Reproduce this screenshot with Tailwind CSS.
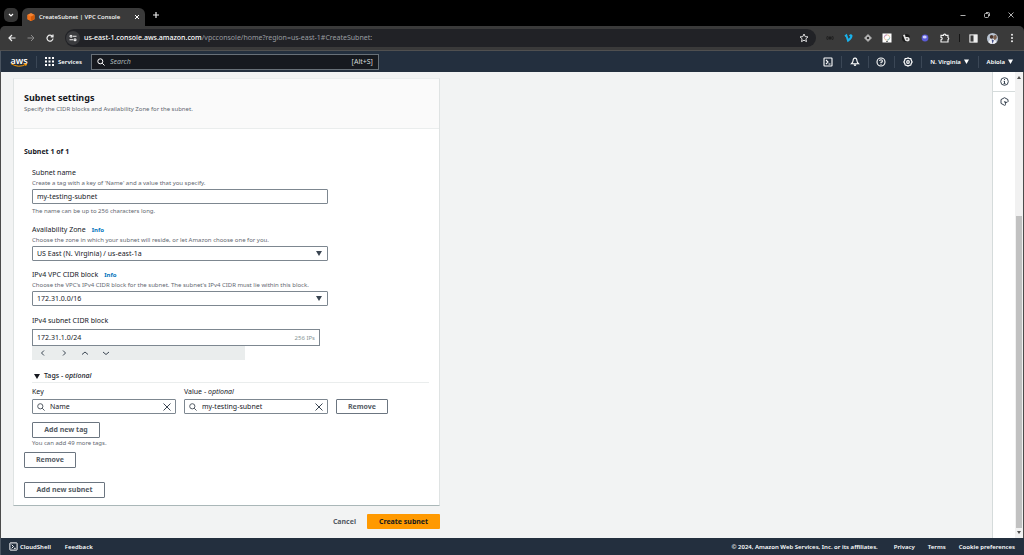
<!DOCTYPE html>
<html lang="en">
<head>
<meta charset="utf-8">
<title>CreateSubnet | VPC Console</title>
<script src="https://cdn.jsdelivr.net/npm/@tailwindcss/browser@4"></script>
</head>
<body class="flex min-h-screen flex-col bg-black font-['Noto_Sans','Open_Sans',sans-serif] text-[7px] leading-[10px] text-[#16191f]">

<!-- Tab strip -->
<div class="flex h-[26px] items-end bg-black pl-1 text-white">
  <button aria-label="Search tabs" class="mb-1 flex size-[14px] items-center justify-center rounded-[5px] bg-[#353535]">
    <svg class="size-2" viewBox="0 0 8 8" fill="none" stroke="#fff" stroke-width="1.200"><path d="M2 3l2 2 2-2"/></svg>
  </button>
  <div class="ml-1 flex h-[18px] w-[123px] items-center rounded-t-[6px] bg-[#3a3a3a] pr-1 pl-[5px]">
    <svg class="size-[8px] shrink-0" viewBox="0 0 16 16"><path d="M8 0l7 3.500v9L8 16l-7-3.500v-9z" fill="#f58534"/><path d="M8 7l7-3.500v9L8 16z" fill="#d45b07"/><path d="M1 3.500L8 7v9l-7-3.500z" fill="#f0701a"/></svg>
    <span class="ml-[4px] flex-1 text-[6px] font-medium whitespace-nowrap">CreateSubnet | VPC Console</span>
    <button aria-label="Close tab"><svg class="size-2" viewBox="0 0 8 8" stroke="#fff" stroke-width="1"><path d="M2 2l4 4M6 2l-4 4"/></svg></button>
  </div>
  <button aria-label="New tab" class="mb-[7px] ml-[7px]"><svg class="size-2" viewBox="0 0 8 8" stroke="#eee" stroke-width="1.200"><path d="M4 1v6M1 4h6"/></svg></button>
  <div class="mb-[7px] ml-auto flex gap-4 pr-[9px]">
    <button aria-label="Minimize"><svg class="size-2" viewBox="0 0 8 8" stroke="#ddd" stroke-width=".8"><path d="M1.500 4.500h5"/></svg></button>
    <button aria-label="Restore"><svg class="size-2" viewBox="0 0 8 8" fill="none" stroke="#ddd" stroke-width=".8"><rect x="1.500" y="2.500" width="4" height="4" rx="1"/><path d="M3 1.500h2.500a1 1 0 0 1 1 1V5"/></svg></button>
    <button aria-label="Close"><svg class="size-2" viewBox="0 0 8 8" stroke="#ddd" stroke-width=".8"><path d="M1.500 1.500l5 5M6.500 1.500l-5 5"/></svg></button>
  </div>
</div>

<!-- Browser toolbar -->
<div class="flex h-[25px] items-center rounded-t-[5px] border-b border-[#505050] bg-[#3a3a3a] pr-[7px] pl-2 text-white">
  <div class="flex gap-[11px]">
    <button aria-label="Back"><svg class="size-2" viewBox="0 0 8 8" fill="none" stroke="#eee" stroke-width="1.200"><path d="M7.500 4H1.200M4 1L1 4l3 3"/></svg></button>
    <button aria-label="Forward"><svg class="size-2" viewBox="0 0 8 8" fill="none" stroke="#8a8a8a" stroke-width="1"><path d="M.5 4h6.300M4 1l3 3-3 3"/></svg></button>
    <button aria-label="Reload"><svg class="size-2" viewBox="0 0 8 8" fill="none" stroke="#eee" stroke-width="1.200"><path d="M6.500 2.500A3 3 0 1 0 7 4.500M7 .5v2.300H4.700"/></svg></button>
  </div>
  <div class="ml-[11px] flex h-[18px] flex-1 items-center rounded-full bg-[#212226] pr-[7px] pl-[1px]">
    <span class="flex size-[14px] items-center justify-center rounded-full bg-[#3a3b3e]"><svg class="size-2" viewBox="0 0 8 8" fill="none" stroke="#eee" stroke-width="1.100"><circle cx="2" cy="2.200" r="1"/><path d="M4 2.200h3.500M.5 5.800H4"/><circle cx="6" cy="5.800" r="1"/></svg></span>
    <div role="textbox" tabindex="0" aria-label="Address" class="ml-1 flex-1 text-[7px] whitespace-nowrap text-[#9a9da1]"><span class="font-medium text-white">us-east-1.console.aws.amazon.com</span>/vpcconsole/home?region=us-east-1#CreateSubnet:</div>
    <button aria-label="Bookmark"><svg class="size-[10px]" viewBox="0 0 10 10" fill="none" stroke="#eee" stroke-width=".9"><path d="M5 1l1.200 2.600 2.800.3-2.100 1.900.6 2.800L5 7.200 2.500 8.600l.6-2.800L1 3.900l2.800-.3z"/></svg></button>
  </div>
  <div class="ml-[9px] flex items-center gap-[9px]">
    <svg class="size-[10px]" viewBox="0 0 10 10" fill="none" stroke="#161616" stroke-width=".8"><path d="M2.500 3Q1 5 2.500 7M7.500 3Q9 5 7.500 7M4 3.500v3M6 3.500v3"/><circle cx="5" cy="5" r="1"/></svg>
    <svg class="size-[10px]" viewBox="0 0 10 10" fill="none" stroke="#19b1ea" stroke-width="2"><path d="M1 3.200l1.300-.9L4 7.600C6 6 7.600 4.200 7.500 2.700Q6.800 1.600 5.600 3.200"/></svg>
    <svg class="size-[10px]" viewBox="0 0 10 10"><path d="M5 1l4 4-4 4-4-4z" fill="#a9a9a9"/><circle cx="5" cy="5" r="1.800" fill="#303030" stroke="#ddd" stroke-width=".7"/></svg>
    <svg class="size-[10px]" viewBox="0 0 10 10"><rect x=".5" y=".5" width="9" height="9" fill="#fff"/><circle cx="5" cy="4.500" r="2.700" fill="none" stroke="#e3b98b" stroke-width=".8"/><path d="M2.300 4.500A2.700 2.700 0 0 1 5 1.800" fill="none" stroke="#b98bd0" stroke-width=".8"/><path d="M7.700 4.500A2.700 2.700 0 0 1 5 7.200" fill="none" stroke="#6fbfd0" stroke-width=".8"/><path d="M4 8.500h2" stroke="#777"/></svg>
    <svg class="size-[10px]" viewBox="0 0 10 10"><circle cx="5" cy="5" r="4" fill="#1c1c1c"/><path d="M2 2l2-.5.500 2.500H6.500a2.200 2.200 0 0 1 0 4.500Q4 8.500 3.500 6z" fill="#e4e4e4"/><path d="M5 6h2" stroke="#333"/></svg>
    <svg class="size-[10px]" viewBox="0 0 10 10"><circle cx="5" cy="5" r="3.400" fill="#5b5bd6"/><ellipse cx="4.700" cy="4" rx="2" ry="1.500" fill="#cfd0ff"/></svg>
    <button aria-label="Extensions" class="ml-px"><svg class="size-[10px]" viewBox="0 0 10 10" fill="none" stroke="#eee" stroke-width="1.200"><path d="M1 2.300h2.500a1.200 1.200 0 0 1 2.400 0H8v2.200a1.200 1.200 0 0 1 0 2.200V9H1V6.800a1.200 1.200 0 0 0 0-2.400z"/></svg></button>
    <span class="h-2 w-px bg-[#151515]"></span>
    <button aria-label="Side panel"><svg class="size-[9px]" viewBox="0 0 10 10"><rect x="1" y="1" width="8" height="8" fill="none" stroke="#eee" stroke-width="1.200"/><path d="M5 1h4v8H5z" fill="#eee"/></svg></button>
    <button aria-label="Profile"><svg class="size-[11px]" viewBox="0 0 12 12"><circle cx="6" cy="6" r="6" fill="#b9c4d2"/><path d="M1.500 10L4 6l2 1.500L8 6l2.300 4A6 6 0 0 1 1.500 10z" fill="#f0f0f4"/><circle cx="5" cy="4.300" r="2" fill="#4d372d"/><path d="M7 3l3-1 .8 3.500L8.500 8 7 6z" fill="#7a5f4d"/><path d="M5 7l1 5 1.500-4z" fill="#44508a"/></svg></button>
    <button aria-label="Menu"><svg class="size-[10px]" viewBox="0 0 10 10" fill="#eee"><circle cx="5" cy="1.700" r="1"/><circle cx="5" cy="5" r="1"/><circle cx="5" cy="8.300" r="1"/></svg></button>
  </div>
</div>

<!-- AWS navigation -->
<header class="flex h-[21px] items-center border-l border-[#4a5460] bg-[#232f3e] pr-2 pl-[9px] text-[6px] font-semibold text-white">
  <a href="#" aria-label="AWS home" class="flex w-[18px] flex-col items-center">
    <span class="text-[9px] leading-[9px] font-semibold">aws</span>
    <svg class="-mt-[2px] h-[4px] w-[18px]" viewBox="0 0 18 4" fill="none" stroke="#f90" stroke-width="1"><path d="M1 .6Q8.500 5.500 16 1.300M13.800.8l2.700.2-.9 2"/></svg>
  </a>
  <span class="ml-2 h-3 w-px bg-[#3b4756]"></span>
  <button class="ml-2 flex items-center gap-1">
    <svg class="size-[9px]" viewBox="0 0 9 9" fill="#fff"><path d="M0 0h2v2H0zM3.500 0h2v2h-2zM7 0h2v2H7zM0 3.500h2v2H0zM3.500 3.500h2v2h-2zM7 3.500h2v2H7zM0 7h2v2H0zM3.500 7h2v2h-2zM7 7h2v2H7z"/></svg>
    Services
  </button>
  <div class="ml-[9px] flex h-4 w-[288px] items-center border border-[#687078] bg-[#16191f] px-[5px] text-[7px] font-normal">
    <svg class="size-2 shrink-0" viewBox="0 0 8 8" fill="none" stroke="#fff" stroke-width="1"><circle cx="3.300" cy="3.300" r="2.500"/><path d="M5.200 5.200l2.300 2.300"/></svg>
    <input type="text" aria-label="Search" placeholder="Search" class="ml-[5px] min-w-0 flex-1 bg-transparent italic outline-none placeholder:text-[#aab7b8]">
    <span class="text-[#d5dbdb]">[Alt+S]</span>
  </div>
  <div class="ml-auto flex items-center divide-x divide-[#3b4756]">
    <button aria-label="CloudShell" class="flex h-3 w-[27px] items-center justify-center"><svg class="size-[10px]" viewBox="0 0 10 10" fill="none" stroke="#fff" stroke-width="1.100"><rect x="1" y="1" width="8" height="8" rx=".5"/><path d="M3 3l2 2-2 2M5.500 7h2"/></svg></button>
    <button aria-label="Notifications" class="flex h-3 w-[27px] items-center justify-center"><svg class="size-[10px]" viewBox="0 0 10 10" fill="none" stroke="#fff" stroke-width="1.100"><path d="M5 1q2 .3 2 3 0 1 1.700 2.800H1.300Q3 5 3 4q0-2.700 2-3zM4 7.500q1 2 2 0"/></svg></button>
    <button aria-label="Help" class="flex h-3 w-[26px] items-center justify-center"><svg class="size-[10px]" viewBox="0 0 10 10" fill="none" stroke="#fff" stroke-width="1.100"><circle cx="5" cy="5" r="4"/><path d="M3.600 4a1.400 1.300 0 1 1 1.400 1.300v.8M5 6.800v1"/></svg></button>
    <button aria-label="Settings" class="flex h-3 w-[27px] items-center justify-center"><svg class="size-[10px]" viewBox="0 0 10 10" fill="none" stroke="#fff" stroke-width="1.200"><path d="M5 .9l1.300.6 1.500.1.400 1.500.9 1.900-.9 1.600-.4 1.500-1.500.3L5 9.100l-1.300-.7-1.500-.3-.4-1.500L.9 5l.9-1.900.4-1.500 1.500-.1z"/><circle cx="5" cy="5" r="1.300"/></svg></button>
    <button class="flex h-3 w-[57px] items-center justify-center gap-[3px] whitespace-nowrap">N. Virginia <svg class="size-[5px]" viewBox="0 0 5 5" fill="#fff"><path d="M0 .5h5L2.500 5z"/></svg></button>
    <button class="flex h-3 items-center gap-[3px] pr-[3px] pl-2">Abiola <svg class="size-[5px]" viewBox="0 0 5 5" fill="#fff"><path d="M0 .5h5L2.500 5z"/></svg></button>
  </div>
</header>

<!-- Page -->
<div class="flex flex-1 border-x border-[#4b4b4b] bg-[#f2f3f3]">
  <main class="flex-1 pt-[6px] pb-2 pl-3">
    <form class="max-w-[427px]">
      <section class="border border-t-[#eaeded] border-x-[#dfe3e3] border-b-[#aab7b8] bg-white pb-[7px]">
        <div class="h-[50px] border-b border-[#eaeded] bg-[#fafafa] pt-[13px] pl-[10px]">
          <h2 class="text-[9px] leading-[12px] font-bold">Subnet settings</h2>
          <p class="text-[6px] leading-[10px] text-[#5f6770]">Specify the CIDR blocks and Availability Zone for the subnet.</p>
        </div>
        <div class="px-[10px] pt-[18px]">
          <h3 class="text-[7px] leading-[10px] font-bold">Subnet 1 of 1</h3>

          <div class="mt-[11px] ml-2 flex max-w-[296px] flex-col gap-[9px]">
            <div>
              <label for="name" class="block">Subnet name</label>
              <p class="text-[6px] text-[#5f6770]">Create a tag with a key of 'Name' and a value that you specify.</p>
              <input id="name" type="text" value="my-testing-subnet" class="mt-px block h-[15px] w-full rounded-[1px] border border-[#7d8790] bg-white px-1 outline-none">
              <p class="mt-[2px] text-[6px] text-[#5f6770]">The name can be up to 256 characters long.</p>
            </div>
            <div>
              <div class="flex gap-[6px]"><label for="az">Availability Zone</label><a href="#" class="text-[6px] font-bold text-[#0073bb]">Info</a></div>
              <p class="text-[6px] text-[#5f6770]">Choose the zone in which your subnet will reside, or let Amazon choose one for you.</p>
              <div class="relative mt-px">
                <select id="az" class="block h-[15px] w-full appearance-none rounded-[1px] border border-[#7d8790] bg-white px-1 outline-none"><option>US East (N. Virginia) / us-east-1a</option></select>
                <svg class="pointer-events-none absolute top-[5px] right-[6px] h-[5px] w-[6px]" viewBox="0 0 6 5" fill="#3a4552"><path d="M0 0h6L3 5z"/></svg>
              </div>
            </div>
            <div>
              <div class="flex gap-[6px]"><label for="vpc">IPv4 VPC CIDR block</label><a href="#" class="text-[6px] font-bold text-[#0073bb]">Info</a></div>
              <p class="text-[6px] whitespace-nowrap text-[#5f6770]">Choose the VPC's IPv4 CIDR block for the subnet. The subnet's IPv4 CIDR must lie within this block.</p>
              <div class="relative mt-px">
                <select id="vpc" class="block h-[15px] w-full appearance-none rounded-[1px] border border-[#7d8790] bg-white px-1 outline-none"><option>172.31.0.0/16</option></select>
                <svg class="pointer-events-none absolute top-[5px] right-[6px] h-[5px] w-[6px]" viewBox="0 0 6 5" fill="#3a4552"><path d="M0 0h6L3 5z"/></svg>
              </div>
            </div>
            <div class="mt-px">
              <label for="cidr" class="block">IPv4 subnet CIDR block</label>
              <div class="mt-[3px] mr-2 flex h-[17px] items-center border border-[#7d8790] px-1">
                <input id="cidr" type="text" value="172.31.1.0/24" class="min-w-0 flex-1 outline-none">
                <span class="text-[6px] text-[#879596]">256 IPs</span>
              </div>
              <div class="flex h-[14px] w-[213px] items-center gap-[13px] bg-[#eaeded] pl-[7px]">
                <button type="button" aria-label="Previous block"><svg class="size-2" viewBox="0 0 8 8" fill="none" stroke="#3a4552"><path d="M5 1.500L2.500 4 5 6.500"/></svg></button>
                <button type="button" aria-label="Next block"><svg class="size-2" viewBox="0 0 8 8" fill="none" stroke="#3a4552"><path d="M3 1.500L5.500 4 3 6.500"/></svg></button>
                <button type="button" aria-label="Larger block"><svg class="size-2" viewBox="0 0 8 8" fill="none" stroke="#3a4552"><path d="M1 5.500L4 3l3 2.500"/></svg></button>
                <button type="button" aria-label="Smaller block"><svg class="size-2" viewBox="0 0 8 8" fill="none" stroke="#3a4552"><path d="M1 3l3 2.500L7 3"/></svg></button>
              </div>
            </div>
          </div>

          <div class="mt-[11px] ml-2">
            <button type="button" class="flex w-full items-center gap-[4px] border-b border-[#eaeded] pb-px pl-[2px] font-medium"><svg class="h-[5px] w-[6px]" viewBox="0 0 6 5" fill="#16191f"><path d="M0 0h6L3 5z"/></svg><span>Tags - <i>optional</i></span></button>
            <div class="mt-[4px] flex items-end gap-2">
              <div class="w-[144px]">
                <label for="key" class="block">Key</label>
                <div class="mt-[2px] flex h-[15px] items-center rounded-[1px] border border-[#7d8790] px-1">
                  <svg class="size-2 shrink-0" viewBox="0 0 8 8" fill="none" stroke="#545b64"><circle cx="3.300" cy="3.300" r="2.600"/><path d="M5.200 5.200l2.400 2.400"/></svg>
                  <input id="key" type="text" value="Name" class="ml-[5px] min-w-0 flex-1 outline-none">
                  <button type="button" aria-label="Clear key"><svg class="size-2" viewBox="0 0 8 8" stroke="#3a4552"><path d="M.5.5l7 7M7.500.5l-7 7"/></svg></button>
                </div>
              </div>
              <div class="w-[144px]">
                <label for="val" class="block">Value - <i>optional</i></label>
                <div class="mt-[2px] flex h-[15px] items-center rounded-[1px] border border-[#7d8790] px-1">
                  <svg class="size-2 shrink-0" viewBox="0 0 8 8" fill="none" stroke="#545b64"><circle cx="3.300" cy="3.300" r="2.600"/><path d="M5.200 5.200l2.400 2.400"/></svg>
                  <input id="val" type="text" value="my-testing-subnet" class="ml-[5px] min-w-0 flex-1 outline-none">
                  <button type="button" aria-label="Clear value"><svg class="size-2" viewBox="0 0 8 8" stroke="#3a4552"><path d="M.5.5l7 7M7.500.5l-7 7"/></svg></button>
                </div>
              </div>
              <button type="button" class="h-[15px] w-[52px] rounded-[1px] border border-[#6b7580] leading-[13px] font-bold text-[#545b64]">Remove</button>
            </div>
            <button type="button" class="mt-2 block h-4 w-[68px] rounded-[1px] border border-[#6b7580] leading-[14px] font-bold text-[#545b64]">Add new tag</button>
            <p class="text-[6px] text-[#5f6770]">You can add 49 more tags.</p>
          </div>
          <button type="button" class="mt-1 block h-4 w-[52px] rounded-[1px] border border-[#6b7580] leading-[14px] font-bold text-[#545b64]">Remove</button>
          <button type="button" class="mt-[14px] block h-4 w-[81px] rounded-[1px] border border-[#6b7580] leading-[14px] font-bold text-[#545b64]">Add new subnet</button>
        </div>
      </section>
      <div class="mt-2 flex items-center justify-end gap-[11px]">
        <button type="button" class="font-bold text-[#545b64]">Cancel</button>
        <button type="submit" class="h-[15px] w-[73px] rounded-[1px] bg-[#ff9900] font-bold">Create subnet</button>
      </div>
    </form>
  </main>
  <aside class="flex w-[23px] flex-col items-center border-l border-[#d5dbdb] bg-white">
    <button aria-label="Info panel" class="flex h-5 w-full items-center justify-center border-b border-[#d5dbdb]"><svg class="size-[9px]" viewBox="0 0 9 9" fill="none" stroke="#3a4552"><circle cx="4.500" cy="4.500" r="3.800"/><path d="M4.500 4v3M4.500 2v1M3.700 4.300h.8M3.500 6.700h2"/></svg></button>
    <button aria-label="Diagnostics" class="flex h-[19px] w-full items-center justify-center"><svg class="size-[9px]" viewBox="0 0 9 9" fill="none" stroke="#3a4552"><path d="M8 5V2.600L4.500.7 1 2.600v3.800l3.500 1.900 1.500-.8"/><path d="M3.800 4l4 1.200-1.600.7-.7 1.600z" fill="#3a4552" stroke="none"/></svg></button>
  </aside>
  <div class="flex w-[8px] flex-col items-center bg-[#f1f1f1] py-1" aria-hidden="true">
    <svg class="h-[3px] w-1" viewBox="0 0 4 3" fill="#505050"><path d="M0 3h4L2 0z"/></svg>
    <span class="mt-[137px] w-[6px] flex-1 bg-[#c1c1c1]"></span>
    <svg class="mt-[3px] h-[3px] w-1" viewBox="0 0 4 3" fill="#505050"><path d="M0 0h4L2 3z"/></svg>
  </div>
</div>

<!-- Footer -->
<footer class="flex h-[17px] items-center border-l border-[#4a5460] bg-[#232f3e] pr-[9px] pl-2 text-[6px] font-semibold text-white">
  <a href="#" class="flex items-center gap-[2px]"><svg class="size-[9px]" viewBox="0 0 10 10" fill="none" stroke="#fff" stroke-width="1.100"><rect x="1" y="1" width="8" height="8" rx=".5"/><path d="M3 3l2 2-2 2M5.500 7h2"/></svg>CloudShell</a>
  <a href="#" class="ml-[14px]">Feedback</a>
  <span class="ml-auto">© 2024, Amazon Web Services, Inc. or its affiliates.</span>
  <a href="#" class="ml-4">Privacy</a>
  <a href="#" class="ml-[13px]">Terms</a>
  <a href="#" class="ml-[13px]">Cookie preferences</a>
</footer>
</body>
</html>
